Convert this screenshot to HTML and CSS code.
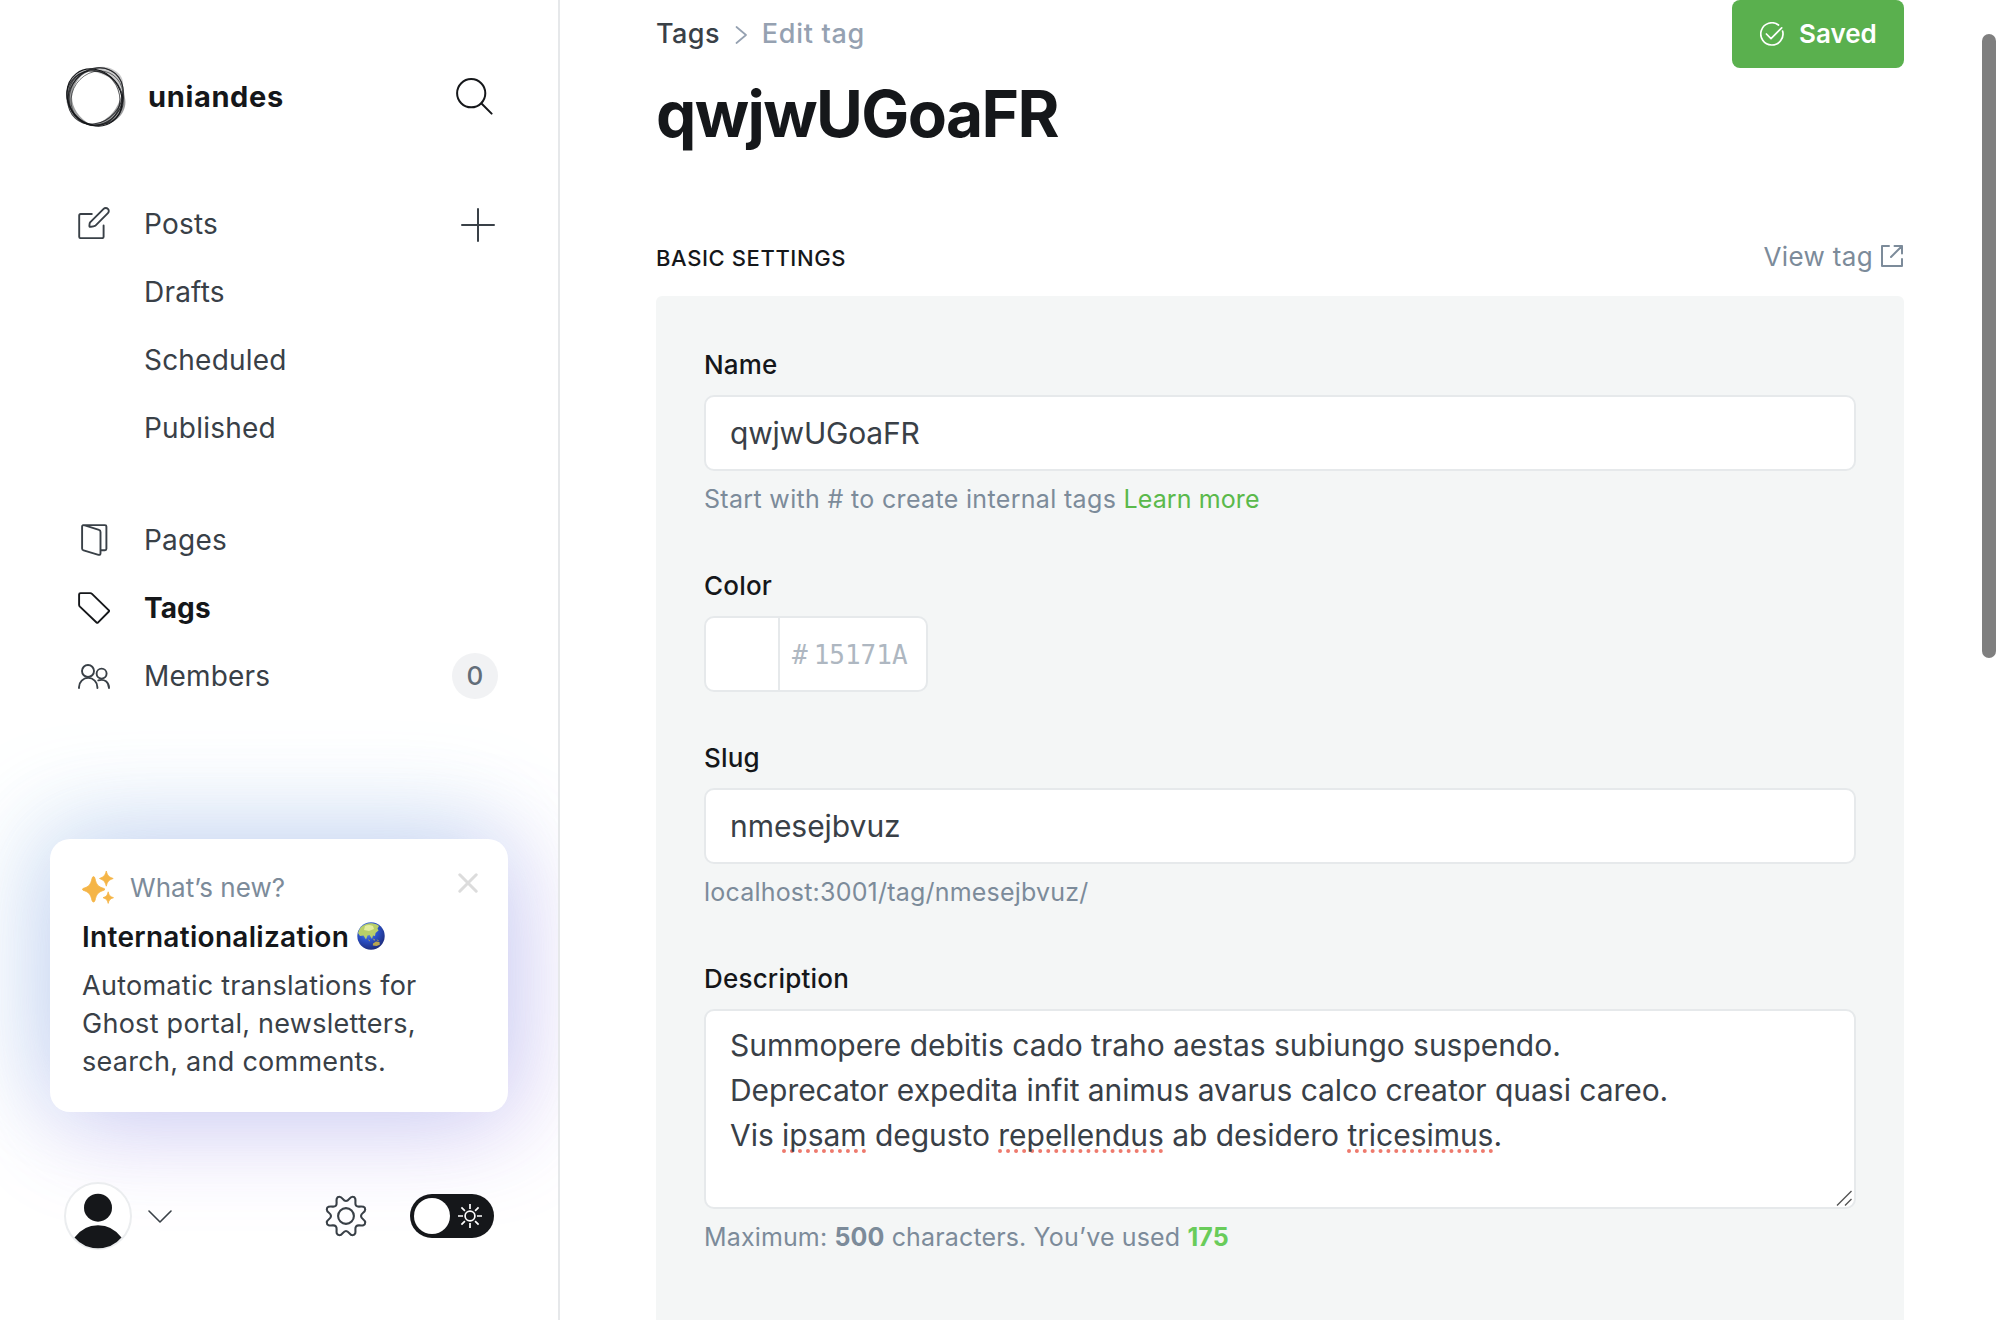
FILE: index.html
```html
<!DOCTYPE html>
<html lang="en">
<head>
<meta charset="utf-8">
<title>Tags - Edit tag</title>
<link rel="stylesheet" href="styles.css">
</head>
<body>
<div class="app">
  <aside class="sidebar">
    <header class="site">
      <svg class="site-logo" width="62" height="62" viewBox="-31 -31 62 62" fill="none" stroke="#15171a">
        <path fill="#15171a" fill-opacity=".22" stroke="none" d="M-6-25C0-30 10-31 18-26 26-22 29-14 26-6 22-15 10-22-6-25Z"/>
        <path fill="#15171a" fill-opacity=".42" stroke="none" d="M-8-26C-22-24-30-14-30 1-29 16-20 26-5 29-17 22-24 12-24 1-23-10-18-20-8-24Z"/>
        <path fill="#15171a" fill-opacity=".42" stroke="none" d="M26-6C32 4 30 16 21 23 14 29 4 30-3 28 12 26 24 12 26-6Z"/>
        <ellipse rx="30" ry="26" transform="translate(-1.500 1.500) rotate(52)" stroke-width="1.200"/>
        <ellipse rx="30" ry="25.500" transform="translate(-.5 0) rotate(-48)" stroke-width="1" stroke-opacity=".8"/>
        <ellipse rx="29.500" ry="26.500" transform="translate(.5 .5) rotate(-62)" stroke-width=".9" stroke-opacity=".7"/>
        <ellipse rx="28" ry="25" transform="translate(1 2) rotate(-55)" stroke-width=".9" stroke-opacity=".6"/>
        <ellipse rx="29" ry="26" transform="translate(-1 2) rotate(35)" stroke-width="1" stroke-opacity=".8"/>
        <ellipse rx="28" ry="25.500" transform="translate(-2 2) rotate(70)" stroke-width="1" stroke-opacity=".7"/>
      </svg>
      <span class="site-name">uniandes</span>
      <svg class="search" width="37" height="37" viewBox="0 0 37 37" fill="none" stroke="#15171a" stroke-width="2" stroke-linecap="round"><circle cx="15.2" cy="15.2" r="14.1"/><path d="M25.5 25.5 35.6 35.6"/></svg>
    </header>

    <nav class="nav">
      <a class="nav-item">
        <svg class="nav-icon icon-posts" width="32" height="32" viewBox="0 0 32 32"><path d="M13.8 7H2.6Q1.2 7 1.2 8.4V29.8Q1.2 31.1 2.5 31.1H24.3Q25.6 31.1 25.6 29.8V18.5M12.6 14.8 25.6 1.9a2.9 2.9 0 0 1 4.3 4.3L17.2 18.8q-1.7 1.2-5.7.9-.4-3.6 1.1-4.9Z"/></svg>
        <span class="nav-label">Posts</span>
        <svg class="plus" width="34" height="34" viewBox="0 0 34 34" fill="none" stroke="#394047" stroke-width="2" stroke-linecap="round"><path d="M17 1v32M1 17h32"/></svg>
      </a>
      <a class="nav-item nav-sub">Drafts</a>
      <a class="nav-item nav-sub">Scheduled</a>
      <a class="nav-item nav-sub">Published</a>
    </nav>
    <nav class="nav nav-second">
      <a class="nav-item">
        <svg class="nav-icon" width="32" height="32" viewBox="-3 0 32 32"><path d="M2 1.1H24q1.4 0 1.4 1.4V24.800q0 1.500-1.400 1.500H20M1.100 2.600V24.500q0 1.500 1.500 1.900L17.500 30.800q2 .4 2-1.500V7.900q0-1.600-1.500-2L3 1.200Q1.100 .9 1.100 2.600Z"/></svg>
        <span class="nav-label">Pages</span>
      </a>
      <a class="nav-item is-active">
        <svg class="nav-icon" width="32" height="32" viewBox="0 0 32 32"><path d="M2.500 1.100H12.200Q13.300 1.100 14 1.800L30.900 18.400Q31.300 19 30.900 19.500L19.900 30.700Q19.300 31.100 18.800 30.700L1.900 14.600Q1.100 13.800 1.100 12.700V2.500Q1.100 1.100 2.500 1.100Z"/></svg>
        <span class="nav-label">Tags</span>
      </a>
      <a class="nav-item">
        <svg class="nav-icon" width="32" height="26" viewBox="0 0 32 26"><circle cx="10" cy="8" r="6"/><circle cx="23.600" cy="10.600" r="5"/><path d="M1 25v-.8a9.200 9.300 0 0 1 18.400 0v.8M20.300 17.400C26.500 15.500 31 19 31 25"/></svg>
        <span class="nav-label">Members</span>
        <span class="count">0</span>
      </a>
    </nav>

    <section class="news">
      <div class="news-head">
        <svg width="32" height="33" viewBox="0 0 32 33" fill="#f5b547"><path d="M11.500 5.500Q12.500 5.500 13 7.500C14.500 14 16 15.500 22 17.500Q24 18.300 22 19.200C16 21.200 14.500 23 13 29.500Q12.500 31 11.500 31 10.500 31 10 29.500C8.500 23 7 21.200 1 19.200Q-.6 18.300 1 17.500C7 15.500 8.500 14 10 7.500Q10.500 5.500 11.500 5.500ZM24.300 0C25.500 4.500 26.500 5.800 31.200 7.500 26.500 9.200 25.500 10.700 24.300 15.200 23 10.700 22 9.200 17.500 7.500 22 5.800 23 4.500 24.300 0ZM26.200 20.800C27 24.500 28 25.600 31.500 26.700 28 27.800 27 29 26.200 32.400 25.300 29 24.500 27.800 21 26.700 24.500 25.600 25.300 24.500 26.200 20.800Z" stroke="#f5b547" stroke-width=".8" stroke-linejoin="round"/></svg>
        <span class="news-kicker">What’s new?</span>
        <svg class="news-close" width="20" height="20" viewBox="0 0 20 20" fill="none" stroke="#dcdcdc" stroke-width="3" stroke-linecap="round"><path d="M1.800 1.800 18.200 18.200M18.200 1.800 1.800 18.200"/></svg>
      </div>
      <h2 class="news-title">Internationalization
        <svg class="globe" width="28" height="28" viewBox="0 0 28 28">
          <defs><radialGradient id="sea" cx=".38" cy=".3" r=".75"><stop offset="0" stop-color="#7fa8e8"/><stop offset=".45" stop-color="#2d55cf"/><stop offset="1" stop-color="#1d2a78"/></radialGradient></defs>
          <circle cx="14" cy="14" r="13.700" fill="url(#sea)"/>
          <path fill="#b9cf6a" d="M4 5Q9 .6 15 1.200 20 1.800 22 4L20.500 6.500 21.500 8.500 18.500 11 18 14 16 13.500 15 17 12.500 13 10.500 13.500 9 17.500 6.500 13.500 3 14 1 11Q2 7.500 4 5Z"/>
          <path fill="#e3eda0" d="M8 4Q12 2 16 4L17 7 12 9 7 8Z"/>
          <path fill="#b8a551" d="M16 21.500 19 19.500 22.500 20 22.800 22.800 19.500 24 15.800 23.500ZM11 17l2 1.500-.8 1ZM16 16.500l2 1-.8 1.500ZM19.500 17.500l2.500.8-1 .8Z"/>
        </svg>
      </h2>
      <p class="news-body">Automatic translations for<br>Ghost portal, newsletters,<br>search, and comments.</p>
    </section>

    <footer class="account">
      <svg width="68" height="68" viewBox="0 0 68 68"><circle cx="34" cy="34" r="33" fill="#fff" stroke="#ebedef" stroke-width="2"/><circle cx="34" cy="25.700" r="14" fill="#15171a"/><path fill="#15171a" d="M10.500 55.500Q19.500 43.200 34 43.200T57.500 55.500Q48.500 66.200 34 66.200T10.500 55.500Z"/></svg>
      <svg class="chevron" width="24" height="13" viewBox="0 0 24 13" fill="none" stroke="#394047" stroke-width="1.600" stroke-linecap="round" stroke-linejoin="round"><path d="M1 1 12 12 23 1"/></svg>
      <svg class="gear" width="42" height="42" viewBox="-21 -21 42 42" fill="none" stroke="#394047" stroke-width="2.100"><circle r="7.900"/>
        <path stroke-linejoin="round" d="M0-15C3.200-15 3.300-19.200 6.500-19.200S9.600-16.500 9.400-13.300C9.200-10.500 10.500-9.200 13.300-9.400C16.500-9.600 19.200-9.700 19.200-6.500S15-3.200 15 0C15 3.200 19.200 3.300 19.200 6.500S16.500 9.600 13.300 9.400C10.500 9.200 9.200 10.500 9.400 13.300C9.600 16.500 9.700 19.200 6.500 19.200S3.200 15 0 15C-3.200 15-3.300 19.200-6.500 19.200S-9.600 16.500-9.400 13.300C-9.200 10.500-10.500 9.200-13.300 9.400C-16.500 9.600-19.200 9.700-19.200 6.500S-15 3.200-15 0C-15-3.200-19.200-3.300-19.200-6.500S-16.500-9.600-13.300-9.400C-10.500-9.200-9.200-10.500-9.400-13.300C-9.600-16.500-9.700-19.200-6.500-19.200S-3.200-15 0-15Z"/></svg>
      <span class="toggle">
        <span class="knob"></span>
        <svg width="24" height="24" viewBox="-12 -12 24 24" fill="none" stroke="#fff" stroke-width="1.700"><circle r="4.900"/><path d="M0-12v5M0 7v5M-12 0h5M7 0h5M-8.600-8.600l3.500 3.500M8.600 8.600 5.100 5.100M-8.600 8.600l3.500-3.500M8.600-8.600 5.100-5.100"/></svg>
      </span>
    </footer>
  </aside>

  <main class="main">
    <header class="topbar">
      <div class="crumbs">
        <a class="crumb">Tags</a>
        <svg width="12" height="18" viewBox="0 0 12 18" fill="none" stroke="#95a1b1" stroke-width="1.700" stroke-linecap="round" stroke-linejoin="round"><path d="M1.500 1 11 9 1.500 17"/></svg>
        <span class="crumb-current">Edit tag</span>
      </div>
      <button class="saved">
        <svg width="24" height="24" viewBox="0 0 24 24" fill="none" stroke="#fff" stroke-width="1.700" stroke-linecap="round" stroke-linejoin="round"><path d="M18.500 3A11.100 11.100 0 1 0 22.600 9M6.400 12 11 16.600 21.700 5.800"/></svg>
        Saved
      </button>
    </header>
    <h1 class="title">qwjwUGoaFR</h1>

    <div class="section-head">
      <h4 class="section-title">Basic settings</h4>
      <a class="view">View tag
        <svg width="22" height="22" viewBox="0 0 22 22" fill="none" stroke="#7c8b9a" stroke-width="2" stroke-linecap="round" stroke-linejoin="round"><path d="M8 1H1V21H21V14M13.500 1H21V8.500M21 1 10 12"/></svg>
      </a>
    </div>

    <section class="panel">
      <div class="field">
        <label class="label">Name</label>
        <div class="input input-name">qwjwUGoaFR</div>
        <p class="help">Start with # to create internal tags <a class="learn">Learn more</a></p>
      </div>
      <div class="field field-color">
        <label class="label">Color</label>
        <div class="color">
          <span class="swatch"></span>
          <span class="hex"><span>#</span><span>15171A</span></span>
        </div>
      </div>
      <div class="field">
        <label class="label">Slug</label>
        <div class="input">nmesejbvuz</div>
        <p class="help help-url">localhost:3001/tag/nmesejbvuz/</p>
      </div>
      <div class="field">
        <label class="label">Description</label>
        <div class="textarea">Summopere debitis cado traho aestas subiungo suspendo.<br>Deprecator expedita infit animus avarus calco creator quasi careo.<br>Vis <span class="typo">ipsam</span> degusto <span class="typo">repellendus</span> ab desidero <span class="typo">tricesimus</span>.
          <svg class="grip" width="16" height="16" viewBox="0 0 16 16" stroke="#555" stroke-width="1.400"><path d="M1 15.500 15.500 1M9 15.500 15.500 9"/></svg>
        </div>
        <p class="help help-count">Maximum: <b>500</b> characters. You’ve used <b class="used">175</b></p>
      </div>
    </section>
  </main>
  <div class="scrollbar"></div>
</div>
</body>
</html>
```
FILE: styles.css
```css
* { box-sizing: border-box; }
body { margin: 0; font-family: Inter, sans-serif; color: #15171a; background: #fff; }
h1, h2, h4, p { margin: 0; }
svg { display: block; flex: none; }

.app { position: relative; display: flex; width: 2000px; height: 1320px; overflow: hidden; }

.sidebar { display: flex; flex-direction: column; flex: none; width: 560px; height: 1320px; overflow: hidden; border-right: 2px solid #e6e8ea; }

.site { display: flex; align-items: center; height: 60px; margin: 66px 65px 0; }
.site-name { margin-left: 21px; font-size: 29px; font-weight: 700; letter-spacing: .65px; }
.search { margin-left: auto; }

.nav { position: relative; z-index: 1; margin: 64px 60px 0 78px; }
.nav-second { margin-top: 44px; }
.nav-item { display: flex; align-items: center; height: 68px; font-size: 28px; letter-spacing: .2px; color: #394047; }
.nav-sub { padding-left: 66px; }
.nav-icon { fill: none; stroke: #394047; stroke-width: 1.900; stroke-linecap: round; stroke-linejoin: round; }
.icon-posts { margin-bottom: 3px; }
.nav-label { margin-left: 34px; }
.is-active { font-weight: 700; color: #15171a; letter-spacing: .1px; }
.is-active .nav-icon { stroke: #15171a; }
.plus { margin-top: 2px; margin-left: auto; margin-right: 3px; }
.count { width: 46px; height: 46px; margin-left: auto; border-radius: 50%; background: #f1f2f4; color: #626d79; font-size: 26px; font-weight: 500; line-height: 46px; letter-spacing: 0; text-align: center; }

.news { width: 458px; height: 273px; margin: 129px 0 0 50px; padding: 29px 27px 0 32px; border-radius: 20px; background: #fff; box-shadow: -14px -14px 100px rgba(115, 195, 225, .33), 12px 14px 100px rgba(165, 105, 230, .33); }
.news-head { display: flex; align-items: center; height: 38px; }
.news-kicker { margin-left: 16px; font-size: 26px; letter-spacing: .05px; color: #7c8b9a; }
.news-close { align-self: flex-start; margin: 5px 3px 0 auto; }
.news-title { display: flex; align-items: center; gap: 8px; margin-top: 12px; font-size: 28px; line-height: 38px; font-weight: 600; letter-spacing: .3px; }
.globe { margin-top: -2px; }
.news-body { margin-top: 11px; font-size: 27px; line-height: 38px; letter-spacing: .27px; color: #394047; }

.account { position: relative; display: flex; align-items: center; height: 68px; margin: 70px 64px 0; }
.chevron { margin-left: 16px; }
.gear { margin-left: auto; margin-right: 43px; }
.toggle { display: flex; align-items: center; justify-content: space-between; width: 84px; height: 44px; padding: 0 12px 0 4px; border-radius: 22px; background: #15171a; }
.knob { width: 36px; height: 36px; border-radius: 50%; background: #fff; }

.main { flex: 1; padding: 0 96px; }
.topbar { display: flex; align-items: center; justify-content: space-between; height: 68px; }
.crumbs { display: flex; align-items: center; padding-bottom: 1px; font-size: 27px; font-weight: 500; }
.crumbs svg { margin: 3px 15px 0 15px; }
.crumb { color: #394047; letter-spacing: .4px; }
.crumb-current { color: #95a1b1; letter-spacing: .7px; }
.saved { display: flex; align-items: center; gap: 15px; width: 172px; height: 68px; padding: 0 0 1px 28px; border: 0; border-radius: 8px; background: #5ab04e; color: #fff; font: 600 26px Inter, sans-serif; }
.title { height: 90px; font-size: 64px; line-height: 91px; font-weight: 700; letter-spacing: -1.600px; }

.section-head { display: flex; align-items: center; justify-content: space-between; height: 40px; margin-top: 79px; }
.section-title { padding-top: 2px; font-size: 22px; font-weight: 500; letter-spacing: .6px; text-transform: uppercase; }
.view { display: flex; align-items: center; gap: 8px; margin: -2px 1px 0 0; font-size: 26px; letter-spacing: .35px; color: #7c8b9a; }

.panel { height: 1100px; margin-top: 19px; padding: 54px 48px 0; border-radius: 6px; background: #f4f6f6; }
.field { height: 221px; }
.field-color { height: 172px; }
.label { display: block; height: 30px; margin-bottom: 15px; font-size: 26px; line-height: 30px; font-weight: 500; letter-spacing: .2px; }
.input, .textarea { border: 2px solid #e6e9eb; border-radius: 10px; background: #fff; color: #394047; font-size: 30px; letter-spacing: -.04px; }
.input { height: 76px; padding-left: 24px; line-height: 73px; }
.input-name { letter-spacing: -.2px; }
.help { margin-top: 13px; font-size: 25px; line-height: 30px; letter-spacing: .33px; color: #7c8b9a; }
.help-url { letter-spacing: .2px; }
.help-count { letter-spacing: .14px; }
.learn { color: #5ab94b; letter-spacing: .1px; }
.help b { font-weight: 700; }
.help .used { color: #69cc5a; }
.color { display: flex; width: 224px; height: 76px; border: 2px solid #e6e9eb; border-radius: 10px; background: #fff; }
.swatch { width: 74px; border-right: 2px solid #e6e9eb; }
.hex { display: flex; align-items: center; gap: 6px; padding: 2px 0 0 12px; color: #aeb7c1; font: 26px "DejaVu Sans Mono", monospace; }
.textarea { position: relative; height: 200px; padding: 12px 24px; line-height: 45px; }
.typo { text-decoration: underline dotted #ee7a6d 4px; text-underline-offset: 3px; text-decoration-skip-ink: none; }
.grip { position: absolute; right: 2px; bottom: 1px; }

.scrollbar { position: absolute; top: 34px; right: 4px; width: 14px; height: 624px; border-radius: 7px; background: #7f7f7f; }
```
